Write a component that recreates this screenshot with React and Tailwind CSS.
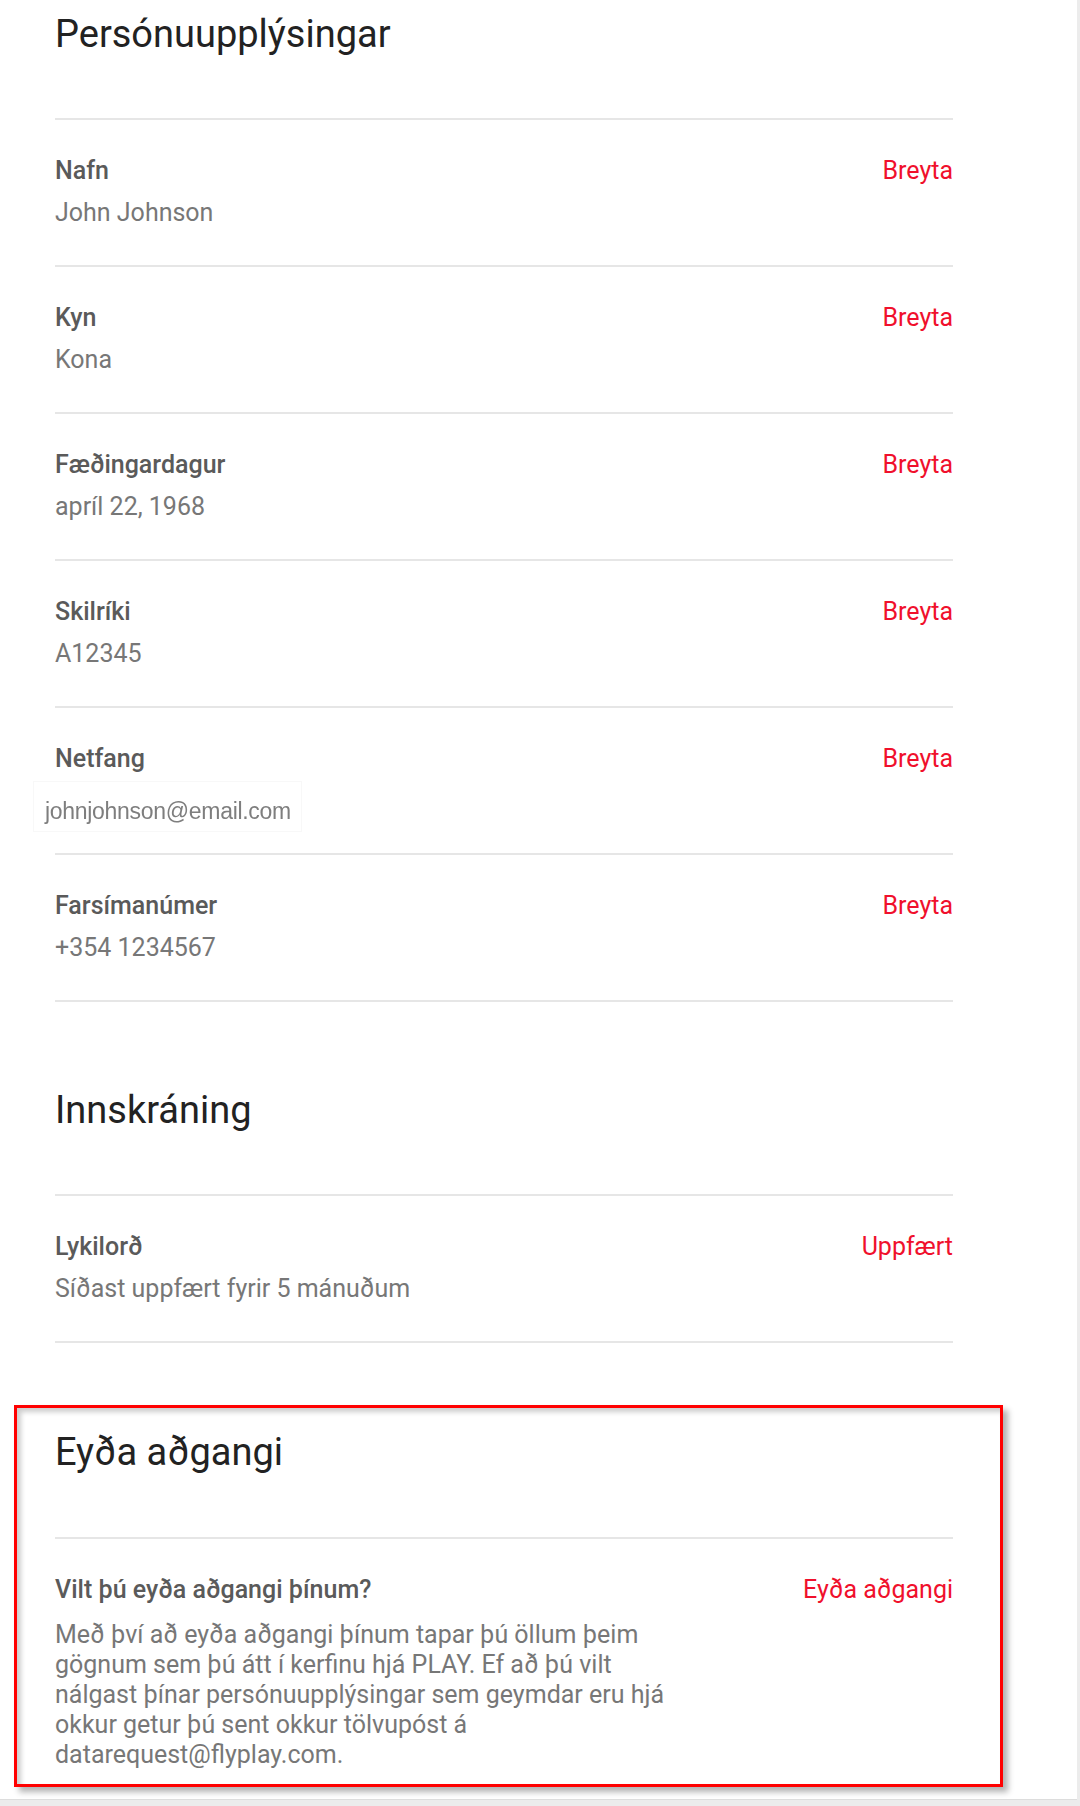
import React from 'react';

const personal = [
    { label: 'Nafn', value: 'John Johnson' },
    { label: 'Kyn', value: 'Kona' },
    { label: 'Fæðingardagur', value: 'apríl 22, 1968' },
    { label: 'Skilríki', value: 'A12345' },
    { label: 'Netfang', email: 'johnjohnson@email.com' },
    { label: 'Farsímanúmer', value: '+354 1234567' },
];

const Heading = ({ children, className = '' }) => (
    <h2 className={`text-[38px] leading-[44px] text-[#222222] ${className}`}>{children}</h2>
);

const Row = ({ label, value, action = 'Breyta', children }) => (
    <div className="flex justify-between items-start pt-[30px] pb-[31px] border-b-2 border-[#e6e6e6]">
        <div>
            <div className="text-[25px] leading-[42px] font-medium text-[#5a5a5a]">{label}</div>
            {children ?? <div className="text-[25px] leading-[42px] text-[#777777]">{value}</div>}
        </div>
        <button className="text-[25px] leading-[42px] text-[#f0102c]">{action}</button>
    </div>
);

export default function App() {
    return (
        <div className="relative w-[1080px] h-[1806px] bg-[#ececec] font-['Roboto',sans-serif]">
            <div className="w-[1077px] h-[1800px] bg-white border-b border-[#dddddd] pl-[55px]">
                <div className="w-[898px]">
                    {/* Persónuupplýsingar */}
                    <Heading className="pt-[12px] mb-[62px]">Persónuupplýsingar</Heading>
                    <div className="border-t-2 border-[#e6e6e6]">
                        {personal.map((item) => (
                            <Row key={item.label} label={item.label} value={item.value}>
                                {item.email && (
                                    <div className="mt-px -mb-[10px] -ml-[22px] h-[51px] w-[269px] border border-[#f8f8f8] pl-[11px] pt-[6px] font-['Liberation_Sans',sans-serif] text-[23px] leading-[47px] tracking-[-0.3px] text-[#7e7e7e] blur-[0.7px]">
                                        {item.email}
                                    </div>
                                )}
                            </Row>
                        ))}
                    </div>

                    {/* Innskráning */}
                    <Heading className="mt-[86px] mb-[62px]">Innskráning</Heading>
                    <div className="border-t-2 border-[#e6e6e6]">
                        <Row label="Lykilorð" value="Síðast uppfært fyrir 5 mánuðum" action="Uppfært" />
                    </div>

                    {/* Eyða aðgangi */}
                    <Heading className="mt-[87px] mb-[63px]">Eyða aðgangi</Heading>
                    <div className="border-t-2 border-[#e6e6e6] pt-[30px]">
                        <div className="flex justify-between items-start">
                            <div className="text-[25px] leading-[42px] font-medium text-[#5a5a5a]">Vilt þú eyða aðgangi þínum?</div>
                            <button className="text-[25px] leading-[42px] text-[#f0102c]">Eyða aðgangi</button>
                        </div>
                        <p className="mt-[9px] w-[630px] text-[25px] leading-[30px] text-[#777777]">
                            Með því að eyða aðgangi þínum tapar þú öllum þeim gögnum sem þú átt í kerfinu hjá PLAY. Ef að þú vilt nálgast þínar persónuupplýsingar sem geymdar eru hjá okkur getur þú sent okkur tölvupóst á datarequest@flyplay.com.
                        </p>
                    </div>
                </div>
            </div>

            {/* annotation frame */}
            <div className="absolute left-[14px] top-[1405px] w-[989px] h-[382px] border-[3px] border-[#ff0000] shadow-[5px_5px_6px_rgba(0,0,0,0.3),inset_4px_4px_5px_rgba(0,0,0,0.2)] pointer-events-none" />
        </div>
    );
}
